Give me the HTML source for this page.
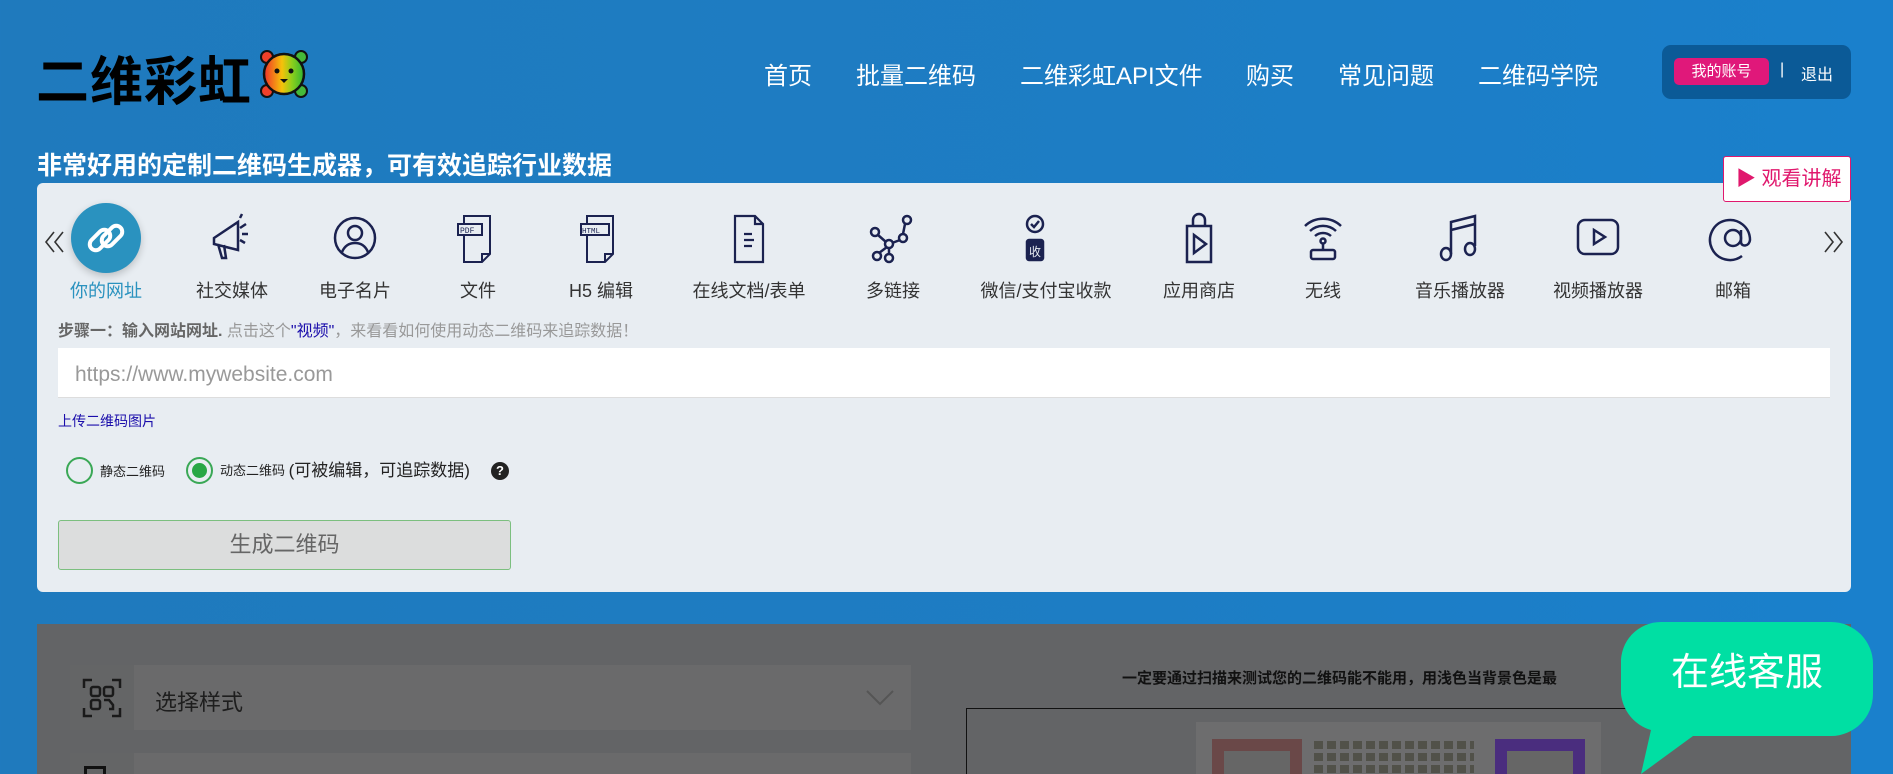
<!DOCTYPE html>
<html><head><meta charset="utf-8">
<style>
*{margin:0;padding:0;box-sizing:border-box}
html,body{width:1893px;height:774px;overflow:hidden}
body{font-family:"Liberation Sans","Noto Sans CJK SC",sans-serif;background:linear-gradient(90deg,#1f7abd 0%,#1d7dc4 60%,#1a80cc 100%);position:relative}
.abs{position:absolute}
.logo{left:36px;top:40px;font-size:53px;font-weight:bold;color:#000;letter-spacing:1px}
.nav{top:56px;font-size:24px;color:#fff}
.acct{left:1662px;top:45px;width:189px;height:54px;background:#0b5a97;border-radius:9px}
.pink{left:12px;top:13px;width:95px;height:27px;background:#e0187a;border-radius:5px;color:#fff;font-size:15px;text-align:center;line-height:27px}
.h1{left:37px;top:146px;font-size:25px;font-weight:bold;color:#fff}
.panel{left:37px;top:183px;width:1814px;height:409px;background:#e8edf2;border-radius:6px}
.watch{left:1723px;top:156px;width:128px;height:46px;background:#fff;border:1px solid #e0186d;border-radius:3px;color:#e0186d;font-size:20px;line-height:44px;padding-left:12px}
.ic{position:absolute;top:212px;width:52px;height:52px;margin-left:-26px}
.lb{position:absolute;top:277px;font-size:18px;color:#333;transform:translateX(-50%);white-space:nowrap}
.lower{left:37px;top:624px;width:1814px;height:170px;background:#636466}
</style></head><body>
<div class="abs logo">二维彩虹</div>
<svg class="abs" style="left:258px;top:48px" width="52" height="52" viewBox="0 0 52 52">
<defs><linearGradient id="g" x1="0" x2="1"><stop offset="0" stop-color="#f0302a"/><stop offset=".45" stop-color="#f5c20a"/><stop offset=".7" stop-color="#8ccf1c"/><stop offset="1" stop-color="#2fb534"/></linearGradient></defs>
<circle cx="9" cy="9" r="6" fill="#f0402a" stroke="#111" stroke-width="2"/><circle cx="43" cy="9" r="6" fill="#45b93a" stroke="#111" stroke-width="2"/>
<circle cx="9" cy="43" r="6" fill="#f0402a" stroke="#111" stroke-width="2"/><circle cx="43" cy="43" r="6" fill="#45b93a" stroke="#111" stroke-width="2"/>
<circle cx="26" cy="26" r="20" fill="url(#g)" stroke="#111" stroke-width="2.5"/>
<circle cx="19" cy="23" r="2.5" fill="#111"/><circle cx="33" cy="23" r="2.5" fill="#111"/><path d="M22 31h8l-4 4z" fill="#111"/>
</svg>
<div class="abs nav" style="left:764px">首页</div>
<div class="abs nav" style="left:856px">批量二维码</div>
<div class="abs nav" style="left:1020px">二维彩虹API文件</div>
<div class="abs nav" style="left:1246px">购买</div>
<div class="abs nav" style="left:1338px">常见问题</div>
<div class="abs nav" style="left:1478px">二维码学院</div>
<div class="abs acct"><div class="abs pink">我的账号</div><div class="abs" style="left:118px;top:16px;color:#fff;font-size:16px">|</div><div class="abs" style="left:139px;top:16px;color:#fff;font-size:16px">退出</div></div>
<div class="abs h1">非常好用的定制二维码生成器，可有效追踪行业数据</div>
<div class="abs panel"></div>
<div class="abs watch">▶ 观看讲解</div>

<svg class="abs" style="left:44px;top:230px" width="22" height="24" viewBox="0 0 22 24" fill="none" stroke="#333" stroke-width="1.6"><path d="M10 2L2 12l8 10M19 2l-8 10 8 10"/></svg>
<svg class="abs" style="left:1822px;top:230px" width="22" height="24" viewBox="0 0 22 24" fill="none" stroke="#333" stroke-width="1.6"><path d="M3 2l8 10-8 10M12 2l8 10-8 10"/></svg>
<div class="abs" style="left:71px;top:203px;width:70px;height:70px;border-radius:50%;background:#2a92bf;box-shadow:0 3px 8px rgba(0,0,0,.2)"></div>
<svg class="ic" style="left:106px;top:212px" viewBox="0 0 52 52" fill="none" stroke="#fff" stroke-width="4"><rect x="8" y="22" width="24" height="12" rx="6" transform="rotate(-45 20 28)"/><rect x="20" y="18" width="24" height="12" rx="6" transform="rotate(-45 32 24)"/></svg>
<svg class="ic" style="left:232px" viewBox="0 0 52 52" fill="none" stroke="#1b2250" stroke-width="2.5"><path d="M8 26l24-16v28L8 32zM12 32l4 14h4l-2-13M34 16l6-4M36 22h6M34 28l5 3M34 6l2-4"/></svg>
<svg class="ic" style="left:355px" viewBox="0 0 52 52" fill="none" stroke="#1b2250" stroke-width="2.5"><circle cx="26" cy="26" r="20"/><circle cx="26" cy="21" r="7"/><path d="M13 40c3-7 8-9 13-9s10 2 13 9"/></svg>
<svg class="ic" style="left:478px" viewBox="0 0 52 52" fill="none" stroke="#1b2250" stroke-width="2"><path d="M12 4h26v38l-8 8H12zM30 50v-8h8"/><rect x="6" y="12" width="24" height="11" fill="#e8edf2"/><text x="8" y="21" font-size="8" fill="#1b2250" stroke="none" font-family="Liberation Mono">PDF</text></svg>
<svg class="ic" style="left:601px" viewBox="0 0 52 52" fill="none" stroke="#1b2250" stroke-width="2"><path d="M12 4h26v38l-8 8H12zM30 50v-8h8"/><rect x="6" y="12" width="28" height="11" fill="#e8edf2"/><text x="7" y="21" font-size="7.5" fill="#1b2250" stroke="none" font-family="Liberation Mono">HTML</text></svg>
<svg class="ic" style="left:749px" viewBox="0 0 52 52" fill="none" stroke="#1b2250" stroke-width="2.2"><path d="M12 4h20l8 8v38H12zM32 4v8h8M21 22h8M21 28h10M21 34h8"/></svg>
<svg class="ic" style="left:893px" viewBox="0 0 52 52" fill="none" stroke="#1b2250" stroke-width="2.5"><circle cx="40" cy="8" r="4"/><circle cx="8" cy="20" r="4"/><circle cx="36" cy="26" r="4"/><circle cx="22" cy="32" r="4"/><circle cx="10" cy="44" r="4"/><circle cx="22" cy="46" r="4"/><path d="M38 12l-2 10M11 23l8 7M33 28l-8 3M20 35l-8 6M22 36v6"/></svg>
<svg class="ic" style="left:1035px" viewBox="0 0 52 52" fill="none" stroke="#1b2250" stroke-width="2.5"><circle cx="26" cy="12" r="8"/><path d="M22 12l3 3 5-6"/><rect x="18" y="28" width="16" height="20" rx="2" fill="#1b2250"/><text x="20" y="44" font-size="12" fill="#e8edf2" stroke="none">收</text></svg>
<svg class="ic" style="left:1199px" viewBox="0 0 52 52" fill="none" stroke="#1b2250" stroke-width="2.5"><path d="M14 14h24v36H14zM20 14V8a6 6 0 0 1 12 0v6M21 23v18l12-9z"/></svg>
<svg class="ic" style="left:1323px" viewBox="0 0 52 52" fill="none" stroke="#1b2250" stroke-width="2.5"><path d="M8 14a26 26 0 0 1 36 0M13 19a19 19 0 0 1 26 0M18 24a12 12 0 0 1 16 0"/><circle cx="26" cy="29" r="2.5"/><path d="M26 32v6"/><rect x="14" y="38" width="24" height="9" rx="2"/></svg>
<svg class="ic" style="left:1460px" viewBox="0 0 52 52" fill="none" stroke="#1b2250" stroke-width="2.5"><path d="M17 42V10l24-6v30M17 18l24-6"/><ellipse cx="12" cy="42" rx="5" ry="6"/><ellipse cx="36" cy="37" rx="5" ry="6"/></svg>
<svg class="ic" style="left:1598px" viewBox="0 0 52 52" fill="none" stroke="#1b2250" stroke-width="2.5"><rect x="6" y="8" width="40" height="34" rx="7"/><path d="M22 18v14l11-7z"/></svg>
<svg class="ic" style="left:1733px" viewBox="0 0 52 52" fill="none" stroke="#1b2250" stroke-width="2.5"><circle cx="26" cy="26" r="8"/><path d="M34 18v12c0 5 8 5 9-2a20 20 0 1 0-8 16"/></svg>

<div class="lb" style="left:106px;color:#2a92bf">你的网址</div>
<div class="lb" style="left:232px">社交媒体</div>
<div class="lb" style="left:355px">电子名片</div>
<div class="lb" style="left:478px">文件</div>
<div class="lb" style="left:601px">H5 编辑</div>
<div class="lb" style="left:749px">在线文档/表单</div>
<div class="lb" style="left:893px">多链接</div>
<div class="lb" style="left:1046px">微信/支付宝收款</div>
<div class="lb" style="left:1199px">应用商店</div>
<div class="lb" style="left:1323px">无线</div>
<div class="lb" style="left:1460px">音乐播放器</div>
<div class="lb" style="left:1598px">视频播放器</div>
<div class="lb" style="left:1733px">邮箱</div>

<div class="abs" style="left:58px;top:317px;font-size:16px;color:#999"><b style="color:#666">步骤一：输入网站网址.</b> 点击这个<span style="color:#1a0dab">"视频"</span>，来看看如何使用动态二维码来追踪数据！</div>
<div class="abs" style="left:58px;top:348px;width:1772px;height:50px;background:#fff;border-bottom:1px solid #ddd;font-size:21px;color:#999;line-height:54px;padding-left:17px">https://www.mywebsite.com</div>
<div class="abs" style="left:58px;top:411px;font-size:14px;color:#1a0dab">上传二维码图片</div>
<div class="abs" style="left:66px;top:457px;width:27px;height:27px;border:2px solid #3aa856;border-radius:50%"></div>
<div class="abs" style="left:100px;top:463px;font-size:13px;color:#222;line-height:17px">静态二维码</div>
<div class="abs" style="left:186px;top:457px;width:27px;height:27px;border:2px solid #3aa856;border-radius:50%;background:#e8edf2"><div style="margin:4px;width:15px;height:15px;border-radius:50%;background:#28a745"></div></div>
<div class="abs" style="left:220px;top:461px;font-size:13px;color:#222;line-height:20px;white-space:nowrap">动态二维码 <span style="font-size:17px;vertical-align:top">(可被编辑，可追踪数据)</span></div>
<div class="abs" style="left:491px;top:462px;width:18px;height:18px;border-radius:50%;background:#222;color:#fff;font-size:13px;font-weight:bold;text-align:center;line-height:18px">?</div>
<div class="abs" style="left:58px;top:520px;width:453px;height:50px;background:#dcdddd;border:1px solid #7cbf7f;border-radius:3px;text-align:center;line-height:48px;font-size:22px;color:#666">生成二维码</div>

<div class="abs lower"></div>
<div class="abs" style="left:70px;top:665px;width:841px;height:65px;background:#6a6a6b"></div>
<div class="abs" style="left:70px;top:665px;width:64px;height:65px;background:#646566"></div>
<svg class="abs" style="left:82px;top:678px" width="40" height="40" viewBox="0 0 40 40" fill="none" stroke="#1a1a1a" stroke-width="2.5"><path d="M2 10V2h8M30 2h8v8M38 30v8h-8M10 38H2v-8"/><rect x="9" y="9" width="9" height="9" rx="2"/><rect x="22" y="9" width="9" height="9" rx="2"/><rect x="9" y="22" width="9" height="9" rx="2"/><path d="M22 22h5l4 5v4h-4"/></svg>
<div class="abs" style="left:155px;top:685px;font-size:22px;color:#1e1e1e">选择样式</div>
<svg class="abs" style="left:866px;top:690px" width="28" height="16" viewBox="0 0 28 16" fill="none" stroke="#555" stroke-width="2"><path d="M1 1l13 13L27 1"/></svg>
<div class="abs" style="left:70px;top:753px;width:841px;height:30px;background:#6a6a6b"></div>
<div class="abs" style="left:70px;top:753px;width:64px;height:30px;background:#646566"></div>
<div class="abs" style="left:84px;top:766px;width:22px;height:12px;border:3px solid #111;border-bottom:none"></div>
<div class="abs" style="left:1122px;top:667px;font-size:15px;font-weight:bold;color:#111;white-space:nowrap">一定要通过扫描来测试您的二维码能不能用，用浅色当背景色是最</div>
<div class="abs" style="left:966px;top:708px;width:880px;height:80px;border:1px solid #111;border-right:none"></div>
<div class="abs" style="left:1196px;top:722px;width:405px;height:60px;background:#6d6d6e"></div>
<div class="abs" style="left:1212px;top:739px;width:90px;height:40px;border:12px solid #6a4848;border-bottom:none;background:#666"></div>
<div class="abs" style="left:1495px;top:739px;width:90px;height:40px;border:12px solid #4a2d7e;border-bottom:none;background:#666"></div>
<div class="abs" style="left:1314px;top:741px;width:160px;height:33px;background:repeating-linear-gradient(90deg,#4b4b40 0 9px,transparent 9px 13px);opacity:.8;-webkit-mask:repeating-linear-gradient(180deg,#000 0 8px,transparent 8px 12px)"></div>

<svg class="abs" style="left:1621px;top:622px" width="253" height="152" viewBox="0 0 253 152"><path d="M40 0h170a42 42 0 0 1 42 42v30a42 42 0 0 1-42 42H72L20 152 30 108A42 42 0 0 1 0 72V42A40 40 0 0 1 40 0z" fill="#00dfa3"/><text x="50" y="63" font-size="38" fill="#fff" font-family="Liberation Sans,Noto Sans CJK SC,sans-serif">在线客服</text></svg>
</body></html>
